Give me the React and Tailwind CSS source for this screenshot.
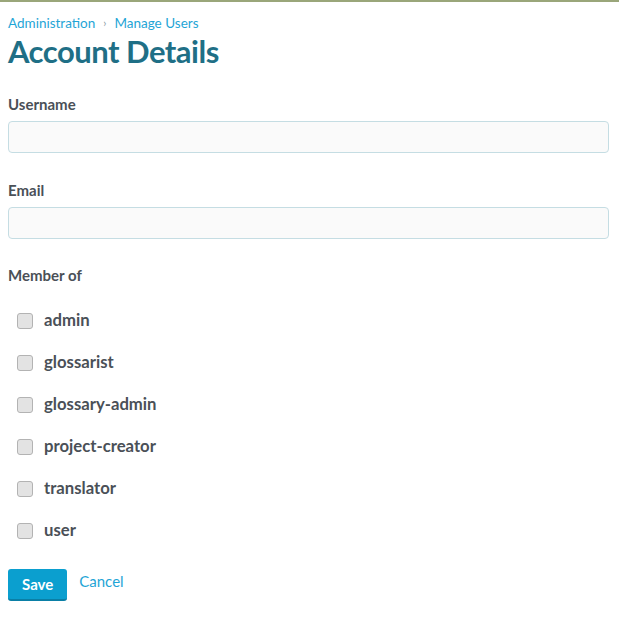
import React from "react";

const groups = ["admin", "glossarist", "glossary-admin", "project-creator", "translator", "user"];

export default function App() {
  return (
    <div className="min-h-[625px] bg-white border-t-2 border-[#9aa67a] font-['Lato',sans-serif] text-[#4a5057]">
      <div className="pl-2 pr-[10px] pt-[12px]">
        <nav className="flex items-center text-[13.5px] leading-[18px] text-[#1fa5d6]">
          <span>Administration</span>
          <span className="mx-[8px] text-[11px] text-[#8a9aa3]">›</span>
          <span>Manage Users</span>
        </nav>
        <h1 className="mt-[-1px] text-[31px] leading-[40px] font-bold tracking-[-0.5px] text-[#1f6f86]">Account Details</h1>

        <form className="mt-[23px]">
          <label className="block text-[15px] leading-[20px] font-bold">Username</label>
          <input className="mt-[7px] block w-full h-[32px] rounded-[4px] border border-[#c5dde3] bg-[#fafafa]" />

          <label className="mt-[27px] block text-[15px] leading-[20px] font-bold">Email</label>
          <input className="mt-[7px] block w-full h-[32px] rounded-[4px] border border-[#c5dde3] bg-[#fafafa]" />

          <label className="mt-[26px] block text-[15px] leading-[20px] font-bold">Member of</label>

          <div className="mt-[15px] flex flex-col">
            {groups.map((g) => (
              <label key={g} className="flex items-center h-[42px] pl-[9px]">
                <span className="w-[16px] h-[16px] rounded-[3px] border border-[#b3b3b3] bg-[#e3e3e3]" />
                <span className="ml-[11px] text-[16.7px] font-bold text-[#4a5057]">{g}</span>
              </label>
            ))}
          </div>

          <div className="mt-[17px] flex items-start">
            <button type="button" className="h-[32px] px-[14px] rounded-[3px] bg-[#0b9fcf] border-b-2 border-[#0a7fa6] text-white text-[15px] font-bold">Save</button>
            <a className="ml-[12px] mt-[1px] text-[15px] text-[#1fa5d6]">Cancel</a>
          </div>
        </form>
      </div>
    </div>
  );
}
